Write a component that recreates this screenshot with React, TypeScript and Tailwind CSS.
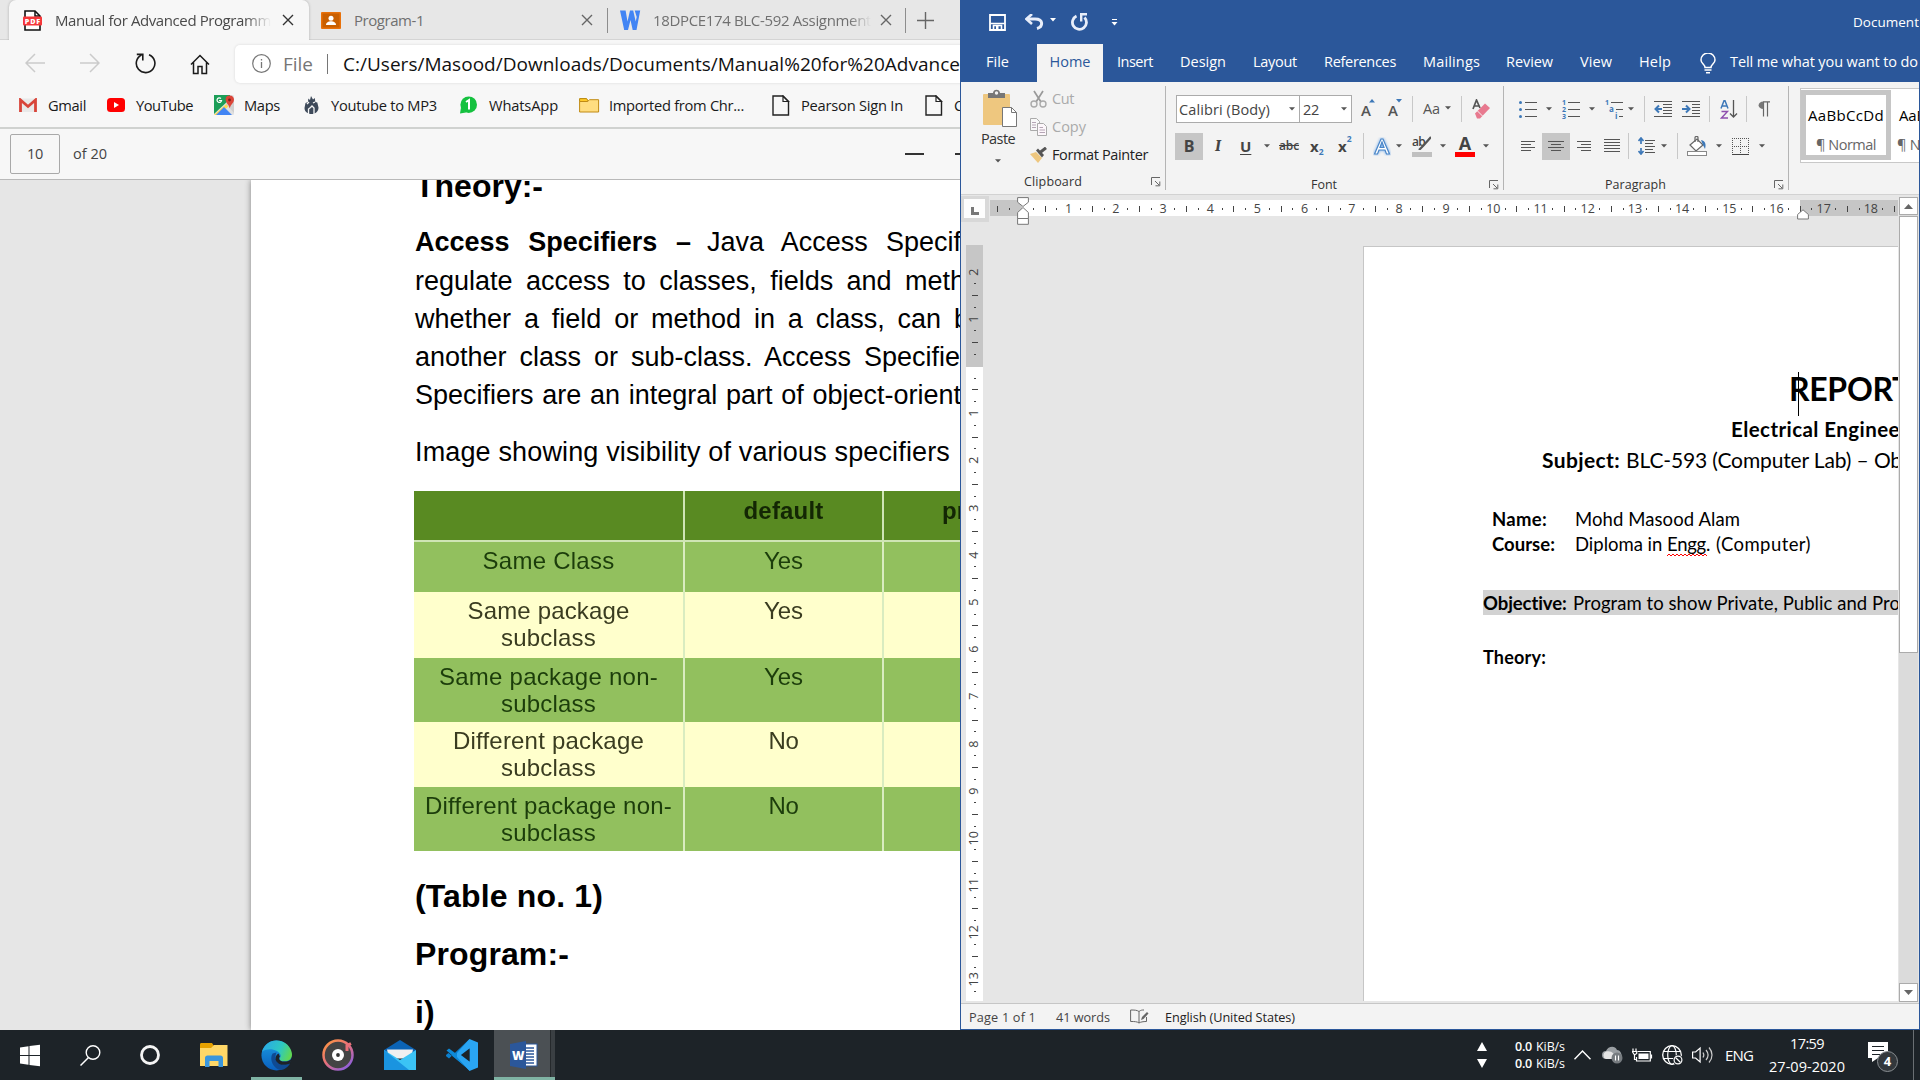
import React, { useLayoutEffect, useRef, useState } from "react";

type TProps = { w: number; children: string; className?: string; by?: "letter" | "word" };

/** Single-line text whose tracking (or word spacing) is adjusted to fill a given width. */
function T({ w, children, className = "", by = "letter" }: TProps) {
  const ref = useRef<HTMLSpanElement>(null);
  const [gap, setGap] = useState(0);
  useLayoutEffect(() => {
    const natural = ref.current!.getBoundingClientRect().width;
    const count = by === "word" ? children.split(" ").length - 1 : children.length;
    setGap(count > 0 ? (w - natural) / count : 0);
  }, []);
  return (
    <span className={`block shrink-0 whitespace-pre ${className}`} style={{ width: w }}>
      <span ref={ref} style={by === "word" ? { wordSpacing: gap } : { letterSpacing: gap }}>
        {children}
      </span>
    </span>
  );
}

function Svg({ w, h, className = "", children }: { w: number; h: number; className?: string; children: React.ReactNode }) {
  return (
    <svg width={w} height={h} viewBox={`0 0 ${w} ${h}`} fill="none" className={`block shrink-0 ${className}`}>
      {children}
    </svg>
  );
}

/* ---------------------------------------------------------------- Browser */

const Cross = ({ className = "" }: { className?: string }) => (
  <Svg w={12} h={12} className={className}>
    <path d="M1 1l10 10M11 1L1 11" stroke="currentColor" strokeWidth="1.4" />
  </Svg>
);

const PageIcon = ({ className = "" }: { className?: string }) => (
  <Svg w={18} h={21} className={className}>
    <path d="M1 1h10l5.500 5.500V20H1z" stroke="#222" strokeWidth="1.4" />
    <path d="M11 1v5.500h5.500z" stroke="#222" strokeWidth="1.200" />
  </Svg>
);

function TabStrip() {
  return (
    <div className="flex h-10 shrink-0 items-center bg-[#e7e7e7] pl-[9px] shadow-[inset_0_-1px_0_#d4d4d4]">
      <div className="flex h-10 w-[300px] shrink-0 items-center rounded-t-[7px] bg-[#f7f7f7] pl-3.5 shadow-[0_0_3px_#00000040]">
        <Svg w={20} h={21}>
          <path d="M2 1h10l5 5v14H2z" fill="#fff" stroke="#111" strokeWidth="1.600" />
          <path d="M12 1v5h5" stroke="#111" strokeWidth="1.500" />
          <rect x="0" y="6.500" width="19" height="9" rx="1" fill="#f5363a" />
          <text x="1.800" y="13.600" fontSize="7.200" fontWeight="800" fill="#fff" fontFamily="Open Sans" textLength="15.400">PDF</text>
        </Svg>
        <div className="ml-3 w-[216px] overflow-hidden text-[15px] leading-[39px] text-[#4a4a4a] [mask-image:linear-gradient(to_right,#000_88%,transparent)]">
          <T w={216}>Manual for Advanced Programm</T>
        </div>
        <Cross className="ml-[11px] text-[#333]" />
      </div>
      <Svg w={20} h={17} className="ml-3">
        <rect width="20" height="17" rx="1" fill="#e8710a" />
        <rect x="1.500" y="1.500" width="17" height="14" fill="#c95f00" />
        <circle cx="10" cy="6.200" r="2.500" fill="#fff" />
        <path d="M5 13c0-5 10-5 10 0z" fill="#fff" />
      </Svg>
      <T w={70} className="ml-[13px] text-[15px] leading-[39px] text-[#707070]">Program-1</T>
      <Cross className="ml-[157px] text-[#666]" />
      <div className="ml-[14px] h-[25px] w-px bg-[#8d8d8d]" />
      <Svg w={21} h={21} className="ml-3">
        <path d="M0 0.500h5.600l1.900 11L10 .500h3.200l2.500 11 1-4.500-2-6.500h5.500L16.500 20h-3.800L10.500 10 8 20H4.200z" fill="#4285f4" />
      </Svg>
      <div className="ml-3 w-[218px] overflow-hidden text-[15px] leading-[39px] text-[#707070] [mask-image:linear-gradient(to_right,#000_90%,transparent)]">
        <T w={218}>18DPCE174 BLC-592 Assignment</T>
      </div>
      <Cross className="ml-[9px] text-[#666]" />
      <div className="ml-[13px] h-[25px] w-px bg-[#8d8d8d]" />
      <Svg w={17} h={17} className="ml-[11px]">
        <path d="M8.500 0v17M0 8.500h17" stroke="#666" strokeWidth="1.400" />
      </Svg>
    </div>
  );
}

function AddressRow() {
  return (
    <div className="flex h-[48px] shrink-0 items-center bg-[#f7f7f7] pl-[25px]">
      <Svg w={20} h={20} className="-mt-[2px]">
        <path d="M20 10H1M10 1l-9 9 9 9" stroke="#cbcbcb" strokeWidth="1.500" />
      </Svg>
      <Svg w={20} h={20} className="-mt-[2px] ml-[35px]">
        <path d="M0 10h19M10 1l9 9-9 9" stroke="#cbcbcb" strokeWidth="1.500" />
      </Svg>
      <Svg w={21} h={21} className="-mt-[2px] ml-[35px]">
        <path d="M14 1.700A9.300 9.300 0 1 1 6.500 2" stroke="#1b1b1b" strokeWidth="1.600" />
        <path d="M1.800 1.400h6v6" stroke="#1b1b1b" strokeWidth="1.600" />
      </Svg>
      <Svg w={20} h={21} className="ml-[34px]">
        <path d="M1 10.500L10 1.500l9 9M3.500 8.500v11h4.500v-7h4v7h4.500v-11" stroke="#1b1b1b" strokeWidth="1.500" />
      </Svg>
      <div className="ml-[25px] flex h-[38px] w-[740px] shrink-0 items-center rounded-[5px] bg-white pl-[17px] shadow-[0_0_3px_#00000020]">
        <Svg w={19} h={19} className="-mt-[2px]">
          <circle cx="9.500" cy="9.500" r="8.800" stroke="#777" strokeWidth="1.200" />
          <path d="M9.500 8v6M9.500 5v1.500" stroke="#777" strokeWidth="1.300" />
        </Svg>
        <T w={30} className="ml-3 text-[19px] leading-[38px] text-[#767676]">File</T>
        <div className="ml-3.5 h-5 w-px bg-[#767676]" />
        <T w={617} className="ml-[15px] text-[19px] leading-[38px] text-[#111]">
          C:/Users/Masood/Downloads/Documents/Manual%20for%20Advance
        </T>
      </div>
    </div>
  );
}

function FavoritesBar() {
  return (
    <div className="flex h-[41px] shrink-0 items-center border-b-2 border-[#d0d2d0] bg-[#f7f7f7] pb-[5px] pl-[19px] text-[14.700px] leading-[35px] text-[#1a1a1a]">
      <Svg w={18} h={14}>
        <rect x="1" y="0.500" width="16" height="13.500" fill="#e9e9e9" />
        <path d="M1.500 14V2l7.500 6.500L16.500 2v12" stroke="#d8453a" strokeWidth="2.800" />
      </Svg>
      <T w={38} className="ml-[11px]">Gmail</T>
      <Svg w={18} h={14} className="ml-[21px]">
        <rect width="18" height="14" rx="3.500" fill="#f00" />
        <path d="M7 4l5 3-5 3z" fill="#fff" />
      </Svg>
      <T w={57} className="ml-[11px]">YouTube</T>
      <Svg w={20} h={20} className="ml-[21px]">
        <rect width="20" height="20" rx="1.500" fill="#e0e0e0" />
        <path d="M0 0h16v4L0 19z" fill="#1c9e58" />
        <path d="M0 20L19 3v4L5 20z" fill="#ffd94d" />
        <path d="M2 20l8-8 8 8z" fill="#4285f4" />
        <path d="M12 9l8 9V4z" fill="#d0d0d0" />
        <path d="M15.500 0.500c5.500 0 5.500 6 2.300 8.700-1.300 1.500-1.800 3-2 4.300-.6-2-1-3-2.300-4.500-3-3.500-2.500-8.500 2-8.500z" fill="#db4437" />
        <circle cx="15.500" cy="5" r="1.400" fill="#7b1f17" />
        <path d="M7 3.500a2.300 2.300 0 1 0 .6 2H5" stroke="#fff" strokeWidth="1.200" />
      </Svg>
      <T w={36} className="ml-2.5">Maps</T>
      <Svg w={15} h={18} className="ml-6">
        <path d="M7 0l2 3.500 1.800-1.500.5 4 2 .5 1.200 5c0 4-3 6.500-7 6.500S.5 15.500.5 12l1-5L4 6l.3-3.500L6 4z" fill="#3e4a5a" />
        <path d="M4.500 18v-5l2-1.500L8 10l2 2v6M3 8l2-2M9 7l2-1" stroke="#f7f7f7" strokeWidth="1.300" />
      </Svg>
      <T w={106} className="ml-3">Youtube to MP3</T>
      <Svg w={17} h={18} className="ml-[23px]">
        <circle cx="8.700" cy="8.700" r="8.300" fill="#15c13f" />
        <path d="M0 17.500l1-6 5 5z" fill="#15c13f" />
        <path d="M6 6l3-2v9.500" stroke="#fff" strokeWidth="2" />
      </Svg>
      <T w={69} className="ml-3">WhatsApp</T>
      <Svg w={21} h={16} className="ml-[21px]">
        <path d="M.6 1.600h7l2 3H.6z" fill="#ffc928" stroke="#b8860b" />
        <path d="M.6 4.500h8l2-1.800h9V15H.6z" fill="#ffdd80" stroke="#c08a14" />
      </Svg>
      <T w={135} className="ml-[9px]">Imported from Chr...</T>
      <PageIcon className="ml-7" />
      <T w={102} className="ml-[11px]">Pearson Sign In</T>
      <PageIcon className="ml-[22px]" />
      <T w={10} className="ml-[11px]">C</T>
    </div>
  );
}

function PdfToolbar() {
  return (
    <div className="flex h-[51px] shrink-0 items-center border-b border-[#b9b9b9] bg-[#f7f7f7] pl-2.5 text-[14.500px] leading-10 text-[#444]">
      <div className="flex h-10 w-[50px] shrink-0 justify-center rounded-[2px] border border-[#a9a9a9] leading-[38px]">
        <T w={16}>10</T>
      </div>
      <T w={34} className="ml-[13px]">of 20</T>
      <div className="ml-[798px] h-[1.500px] w-[19px] shrink-0 bg-[#333]" />
      <div className="ml-[31px] h-[1.500px] w-[19px] shrink-0 bg-[#333]" />
    </div>
  );
}

const specifierRows = [
  { lines: [["Same Class", 132]], access: "Yes", w: 39, h: "h-[50px] bg-[#92c05e] text-[#1c3d0b]" },
  { lines: [["Same package", 162], ["subclass", 95]], access: "Yes", w: 39, h: "h-[66px] bg-[#ffffcc] text-[#3a3c20]" },
  { lines: [["Same package non-", 219], ["subclass", 95]], access: "Yes", w: 39, h: "h-[64px] bg-[#92c05e] text-[#1c3d0b]" },
  { lines: [["Different package", 191], ["subclass", 95]], access: "No", w: 30, h: "h-[65px] bg-[#ffffcc] text-[#3a3c20]" },
  { lines: [["Different package non-", 247], ["subclass", 95]], access: "No", w: 30, h: "h-[64px] bg-[#92c05e] text-[#1c3d0b]" },
] as { lines: [string, number][]; access: string; w: number; h: string }[];

function SpecifierTable() {
  return (
    <div className="-ml-px mt-[20px] w-[560px] text-[24px] leading-[27px] blur-[0.5px]">
      <div className="flex h-[51px] border-b-2 border-[#cfe5b5] bg-[#598a22] pt-1.5 font-bold text-[#132604]">
        <div className="-mt-1.5 h-[50px] w-[271px] border-r-2 border-[#cfe5b5]" />
        <div className="-mt-1.5 flex h-[50px] w-[199px] justify-center border-r-2 border-[#cfe5b5] pt-1.5">
          <T w={80}>default</T>
        </div>
        <T w={24} className="ml-[58px]">pr</T>
      </div>
      {specifierRows.map((r, i) => (
        <div key={i} className={`flex ${r.h}`}>
          <div className="flex w-[271px] flex-col items-center border-r-2 border-[#d9ecc0] pt-[5px]">
            {r.lines.map(([t, w], k) => (
              <T key={k} w={w}>{t}</T>
            ))}
          </div>
          <div className="flex w-[199px] justify-center border-r-2 border-[#d9ecc0] pt-[5px]">
            <T w={r.w}>{r.access}</T>
          </div>
        </div>
      ))}
    </div>
  );
}

function PdfView() {
  return (
    <div className="flex min-h-0 flex-1 overflow-hidden bg-[#e6e6e6] pl-[251px]">
      <div className="w-[720px] shrink-0 bg-white pl-[164px] font-['Liberation_Sans',sans-serif] text-black shadow-[0_0_6px_#00000070]">
        <T w={128} className="-mt-[14px] h-10 text-[32px] font-bold leading-10">Theory:-</T>
        <div className="mt-[17px] flex text-[27px] leading-[39px]">
          <T w={276} by="word" className="font-bold">Access Specifiers –</T>
          <T w={254} by="word" className="ml-4">Java Access Specif</T>
        </div>
        <div className="text-[27px] leading-[38px]">
          <T w={550} by="word">regulate access to classes, fields and meth</T>
          <T w={554} by="word">whether a field or method in a class, can b</T>
          <T w={545} by="word">another class or sub-class. Access Specifie</T>
          <T w={546} by="word">Specifiers are an integral part of object-orient</T>
          <T w={535} className="mt-[19px]">Image showing visibility of various specifiers</T>
        </div>
        <SpecifierTable />
        <div className="mt-[16px] text-[32px] font-bold leading-[58px]">
          <T w={188}>(Table no. 1)</T>
          <T w={154}>Program:-</T>
          <T w={20}>i)</T>
        </div>
      </div>
    </div>
  );
}

function Browser() {
  return (
    <section className="flex w-[960px] shrink-0 flex-col overflow-hidden">
      <TabStrip />
      <AddressRow />
      <FavoritesBar />
      <PdfToolbar />
      <PdfView />
    </section>
  );
}

/* ------------------------------------------------------------------- Word */

const Caret = ({ className = "" }: { className?: string }) => (
  <Svg w={6} h={4} className={className}>
    <path d="M0 .3h6L3 3.500z" fill="#555" />
  </Svg>
);

const Sep = ({ className = "" }: { className?: string }) => (
  <div className={`h-[26px] w-px shrink-0 bg-[#c8c8c8] ${className}`} />
);

const Launcher = ({ className = "" }: { className?: string }) => (
  <Svg w={10} h={10} className={className}>
    <path d="M.5 8V.5H9M4 4l4 4M8.800 4.500v4.300H4.500" stroke="#666" />
  </Svg>
);

const Lines = ({ rows, className = "" }: { rows: [number, number][]; className?: string }) => (
  <Svg w={18} h={16} className={className}>
    {rows.map(([x, w], i) => (
      <rect key={i} x={x} y={1 + i * 3} width={w} height="1" fill="#555" />
    ))}
  </Svg>
);

function TitleBar() {
  return (
    <div className="flex h-11 shrink-0 items-center pl-7 text-white">
      <Svg w={17} h={17}>
        <path d="M1 1h15v15H1z" stroke="#fff" strokeWidth="1.800" />
        <path d="M1.500 9.500h14M4.500 16v-4.500h8V16" stroke="#fff" strokeWidth="1.600" />
        <rect x="7" y="12" width="2.500" height="4" fill="#fff" />
      </Svg>
      <Svg w={19} h={16} className="ml-[19px]">
        <path d="M2 5h8c9 0 8 8 2 9.500" stroke="#e8eefa" strokeWidth="3" />
        <path d="M7 0L1.500 5 7 10" stroke="#e8eefa" strokeWidth="2.600" />
      </Svg>
      <Svg w={6} h={4} className="mb-1 ml-[6px]"><path d="M0 0h6L3 3.500z" fill="#fff" /></Svg>
      <Svg w={18} h={18} className="ml-[15px]">
        <path d="M5.500 3A7 7 0 1 0 13.500 4.500" stroke="#e8eefa" strokeWidth="2.800" />
        <path d="M9 1.300h7M10.200 1v7.500" stroke="#e8eefa" strokeWidth="2.400" />
      </Svg>
      <Svg w={7} h={7} className="ml-[22px]">
        <path d="M1 .5h5" stroke="#fff" />
        <path d="M.5 3h6l-3 3.500z" fill="#fff" />
      </Svg>
      <T w={66} className="-mt-px ml-[735px] text-[13.500px] leading-[18px]">Document</T>
    </div>
  );
}

const ribbonTabs: [string, number, string][] = [
  ["Insert", 36, "ml-[14px]"],
  ["Design", 46, "ml-[27px]"],
  ["Layout", 44, "ml-[27px]"],
  ["References", 72, "ml-[27px]"],
  ["Mailings", 57, "ml-[27px]"],
  ["Review", 47, "ml-[26px]"],
  ["View", 32, "ml-[27px]"],
  ["Help", 32, "ml-[27px]"],
];

function RibbonTabs() {
  return (
    <div className="flex h-[38px] shrink-0 items-start pl-[25px] text-[14.500px] leading-[36px] text-white">
      <T w={23}>File</T>
      <div className="ml-7 flex h-[38px] w-[66px] shrink-0 justify-center bg-[#f3f3f3] text-[#2b579a]">
        <T w={41}>Home</T>
      </div>
      {ribbonTabs.map(([t, w, m]) => (
        <T key={t} w={w} className={m}>{t}</T>
      ))}
      <Svg w={16} h={21} className="ml-[29px] mt-[9px]">
        <path d="M5 14.500c0-3-4-4-4-7.500a7 7 0 0 1 14 0c0 3.500-4 4.500-4 7.500z" stroke="#fff" strokeWidth="1.500" />
        <path d="M4.500 17h7M6 19.800h4" stroke="#fff" strokeWidth="1.500" />
      </Svg>
      <T w={188} className="ml-[14px]">Tell me what you want to do</T>
    </div>
  );
}

function ClipboardGroup() {
  return (
    <div className="mt-1 flex h-[104px] w-[205px] shrink-0 flex-col border-r border-[#b4b4b4]">
      <div className="flex h-[88px]">
        <div className="flex w-[66px] flex-col items-center pl-[10px] pt-[3px]">
          <Svg w={36} h={40} className="ml-[2px]">
            <rect x="1" y="5" width="27" height="31" rx="1" fill="#eec77f" />
            <path d="M6 9V4h5c0-4.500 7-4.500 7 0h5v5z" fill="#777" />
            <circle cx="14.500" cy="4" r="1.700" fill="#f3f3f3" />
            <path d="M20.500 18.500h9l5 5v14h-14z" fill="#fff" stroke="#777" />
            <path d="M29.500 18.500v5h5" stroke="#777" />
          </Svg>
          <T w={34} className="-ml-[2px] mt-[1px] text-[14.500px] leading-[18px] text-[#333]">Paste</T>
          <Caret className="-ml-[2px] mt-[11px]" />
        </div>
        <div className="-mt-px text-[14.500px] leading-[28px]">
          <div className="flex h-7 items-center pl-[3px] text-[#aaa]">
            <Svg w={17} h={18}>
              <path d="M4 1l7 11M13 1L6 12" stroke="#999" strokeWidth="1.700" />
              <circle cx="4" cy="14" r="3" stroke="#aaa" strokeWidth="1.400" />
              <circle cx="13" cy="14" r="3" stroke="#aaa" strokeWidth="1.400" />
            </Svg>
            <T w={22} className="ml-[5px]">Cut</T>
          </div>
          <div className="flex h-7 items-center pl-[3px] text-[#aaa]">
            <Svg w={17} h={18}>
              <path d="M.5.500h6l3 3v9h-9z" fill="#f8f8f8" stroke="#aaa" />
              <path d="M7.500 5.500h6l3 3v9h-9z" fill="#fdf7fb" stroke="#aaa" />
              <path d="M2 4.500h4M2 7h4M2 9.500h4M9.500 9.500H13M9.500 12H15M9.500 14.500H15" stroke="#b5a5b5" />
            </Svg>
            <T w={34} className="ml-[5px]">Copy</T>
          </div>
          <div className="flex h-7 items-center pl-[3px] text-[#222]">
            <Svg w={18} h={16}>
              <path d="M0 7l6-2 6 6-4 5z" fill="#eec77f" />
              <path d="M6 3.500l6 7 2-2.500-6-6.500z" fill="#555" />
              <path d="M10 5.500L16 .800" stroke="#555" strokeWidth="3" />
            </Svg>
            <T w={96} className="ml-1">Format Painter</T>
          </div>
        </div>
      </div>
      <div className="mt-[3px] flex h-4 items-center pl-[63px] text-[12.500px] leading-4 text-[#333]">
        <T w={58}>Clipboard</T>
        <Launcher className="ml-[69px]" />
      </div>
    </div>
  );
}

function FontGroup() {
  return (
    <div className="mt-1 h-[104px] w-[338px] shrink-0 border-r border-[#b4b4b4]">
      <div className="mt-[9px] flex h-7 items-center pl-2.5 text-[14.500px] leading-[27px] text-[#444]">
        <div className="flex h-7 w-[124px] shrink-0 items-center border border-[#ababab] bg-white pl-[2px]">
          <T w={91}>Calibri (Body)</T>
          <Caret className="ml-[19px]" />
        </div>
        <div className="-ml-px flex h-7 w-[53px] shrink-0 items-center border border-[#ababab] bg-white pl-[3px]">
          <T w={16}>22</T>
          <Caret className="ml-[22px]" />
        </div>
        <div className="ml-[9px] flex w-[15px] shrink-0 text-[#555]">
          <span className="mt-[1px] text-[15px] font-semibold leading-[26px]">A</span>
          <Svg w={6} h={4} className="-ml-[2px] mt-[3px]"><path d="M0 3.500h6L3 0z" fill="#3d78b8" /></Svg>
        </div>
        <div className="ml-[12px] flex w-[15px] shrink-0 text-[#555]">
          <span className="mt-[2px] text-[15px] font-semibold leading-[26px]">A</span>
          <Svg w={6} h={4} className="-ml-[2px] mt-[4px]"><path d="M0 0h6L3 3.500z" fill="#3d78b8" /></Svg>
        </div>
        <Sep className="ml-[9px]" />
        <T w={17} className="-mt-[2px] ml-2.5 text-[#555]">Aa</T>
        <Caret className="-mt-[2px] ml-[5px]" />
        <Sep className="ml-[10px]" />
        <Svg w={19} h={20} className="ml-[10px]">
          <path d="M1 10L4.500 1 8 9M2 7h5" stroke="#555" strokeWidth="1.700" />
          <path d="M3 14.500L13 4.500l5 4.500L8 19.500H5z" fill="#e8798f" />
          <path d="M5.500 12l5 5" stroke="#f3f3f3" />
        </Svg>
      </div>
      <div className="mt-[9px] flex h-7 items-center pl-[9px] text-[#444]">
        <div className="flex h-[27px] w-7 shrink-0 items-center justify-center bg-[#c6c6c6] text-[16px] font-bold">B</div>
        <span className="ml-3 w-[12px] font-serif text-[17px] font-bold italic">I</span>
        <span className="ml-[13px] w-[13px] text-[15px] font-bold underline underline-offset-2">U</span>
        <Caret className="ml-[11px]" />
        <T w={20} className="ml-[9px] text-[12px] font-semibold line-through">abc</T>
        <div className="ml-[11px] flex w-[15px] shrink-0 items-end">
          <span className="text-[15px] font-bold leading-6">x</span>
          <span className="text-[8.500px] font-bold leading-3 text-[#3d78b8]">2</span>
        </div>
        <div className="ml-[13px] flex w-[15px] shrink-0 items-start">
          <span className="text-[15px] font-bold leading-6">x</span>
          <span className="text-[8.500px] font-bold leading-[10px] text-[#3d78b8]">2</span>
        </div>
        <Sep className="ml-[10px]" />
        <Svg w={18} h={19} className="ml-[9px]">
          <path d="M1.500 17L8 2h2l6.500 15h-3L12 13H6l-1.500 4zM7 10.500h4L9 5z" fill="#fff" stroke="#4a86c8" strokeWidth="1.200" className="drop-shadow-[0_0_1.500px_#6fa8e8]" />
        </Svg>
        <Caret className="ml-[5px]" />
        <div className="ml-[10px] flex h-[21px] w-5 shrink-0 flex-col justify-between">
          <div className="flex">
            <T w={13} className="text-[12px] font-semibold leading-[12px]">ab</T>
            <Svg w={14} h={14} className="-ml-[8px]"><path d="M14 1L6 10l-4 4" stroke="#555" strokeWidth="2.200" /></Svg>
          </div>
          <div className="h-[5px] shrink-0 bg-[#c0c0c0]" />
        </div>
        <Caret className="ml-[8px]" />
        <div className="ml-[9px] w-5 shrink-0">
          <div className="text-center text-[18px] font-bold leading-[15px]">A</div>
          <div className="mt-[1px] h-[5px] bg-[#ff0000]" />
        </div>
        <Caret className="ml-[8px]" />
      </div>
      <div className="mt-[17px] flex h-4 items-center pl-[145px] text-[12.500px] leading-4 text-[#333]">
        <T w={26}>Font</T>
        <Launcher className="ml-[152px]" />
      </div>
    </div>
  );
}

function ParagraphGroup() {
  return (
    <div className="mt-1 h-[104px] w-[285px] shrink-0 border-r border-[#b4b4b4]">
      <div className="mt-[9px] flex h-7 items-center pl-[15px]">
        <Svg w={18} h={18}>
          <path d="M6 2.500h12M6 9.500h12M6 16.500h12" stroke="#555" />
          <g fill="#3d78b8"><circle cx="1.500" cy="2.500" r="1.500" /><circle cx="1.500" cy="9.500" r="1.500" /><circle cx="1.500" cy="16.500" r="1.500" /></g>
        </Svg>
        <Caret className="ml-[9px]" />
        <Svg w={18} h={19} className="ml-[10px]">
          <path d="M6 2.500h12M6 9.500h12M6 16.500h12" stroke="#555" />
          <g fill="#3d78b8" fontSize="7" fontWeight="700" fontFamily="Open Sans"><text y="5">1</text><text y="12">2</text><text y="19">3</text></g>
        </Svg>
        <Caret className="ml-[9px]" />
        <Svg w={18} h={19} className="ml-[10px]">
          <path d="M6 2.500h12M11 9.500h7M14 16.500h4" stroke="#555" />
          <g fill="#3d78b8" fontSize="8" fontWeight="700" fontFamily="Open Sans"><text y="5" fontSize="7">1</text><text x="4" y="12">a</text><text x="10" y="19">i</text></g>
        </Svg>
        <Caret className="ml-[5px]" />
        <Sep className="ml-[10px]" />
        <Svg w={18} h={16} className="ml-[9px]">
          <path d="M0 .5h18M9 3.500h9M9 6.500h9M9 9.500h9M9 12.500h9M0 15.500h18" stroke="#555" />
          <path d="M8 8H2M5 4.500L1.500 8 5 11.500" stroke="#3d78b8" strokeWidth="2" />
        </Svg>
        <Svg w={18} h={16} className="ml-[10px]">
          <path d="M0 .5h18M10 3.500h8M10 6.500h8M10 9.500h8M10 12.500h8M0 15.500h18" stroke="#555" />
          <path d="M0 8h6M4 4.500L7.500 8 4 11.500" stroke="#3d78b8" strokeWidth="2" />
        </Svg>
        <Sep className="ml-[9px]" />
        <Svg w={18} h={19} className="ml-[10px]">
          <path d="M1 8.500L4 .8h1l3 7.700M2 6h5" stroke="#3d78b8" strokeWidth="1.500" />
          <path d="M1.500 11.500h6l-6 6.500h6.500" stroke="#8e4fae" strokeWidth="1.400" />
          <path d="M13.500 0v17M10 13.500l3.500 3.500 3.500-3.500" stroke="#555" strokeWidth="1.300" />
        </Svg>
        <Sep className="ml-[8px]" />
        <Svg w={12} h={16} className="ml-[11px]">
          <path d="M5.500 15.500V1M9.500 15.500V1M12 .800H5" stroke="#666" strokeWidth="1.200" />
          <path d="M5.500.500C-1 .500-1 8 5.500 8z" fill="#777" />
        </Svg>
      </div>
      <div className="mt-[9px] flex h-7 items-center pl-[15px]">
        <Lines rows={[[2, 14], [2, 10], [2, 14], [2, 10]]} className="mt-[3px]" />
        <div className="ml-[5px] flex h-[27px] w-7 shrink-0 items-center justify-center bg-[#c6c6c6]">
          <Lines rows={[[1, 16], [4, 10], [1, 16], [4, 10]]} className="mt-[3px]" />
        </div>
        <Lines rows={[[2, 14], [6, 10], [2, 14], [6, 10]]} className="ml-[5px] mt-[3px]" />
        <Lines rows={[[1, 16], [1, 16], [1, 16], [1, 16], [1, 16]]} className="ml-[10px]" />
        <Sep className="ml-[7px]" />
        <Svg w={18} h={18} className="ml-[9px]">
          <path d="M7 3.500h10M7 6.500h8M7 9.500h10M7 12.500h8M7 15.500h10" stroke="#555" />
          <path d="M3 1v6M3 11v6M.5 4L3 1l2.500 3M.5 14L3 17l2.500-3" stroke="#3d78b8" strokeWidth="1.700" />
        </Svg>
        <Caret className="ml-[5px]" />
        <Sep className="ml-[10px]" />
        <Svg w={20} h={20} className="ml-[9px]">
          <path d="M3 9l7-6 6 6-7 6z" fill="#fff" stroke="#666" strokeWidth="1.200" />
          <path d="M8 6V1.500c0-1.500 3-1.500 3 0V6" stroke="#666" strokeWidth="1.200" />
          <path d="M14 4c5 1 5 5 4 9l-2-4z" fill="#3d78b8" />
          <rect x=".5" y="15.500" width="19" height="4" fill="#fff" stroke="#888" />
        </Svg>
        <Caret className="ml-[9px]" />
        <Svg w={17} h={17} className="ml-[10px]">
          <path d="M.5 0v16M8.500 0v16M16.500 0v16M0 .5h17M0 8.500h17" stroke="#555" strokeDasharray="1 1" />
          <path d="M0 16.500h17" stroke="#444" />
        </Svg>
        <Caret className="ml-[10px]" />
      </div>
      <div className="mt-[17px] flex h-4 items-center pl-[101px] text-[12.500px] leading-4 text-[#333]">
        <T w={61}>Paragraph</T>
        <Launcher className="ml-[108px]" />
      </div>
    </div>
  );
}

function StylesGallery() {
  return (
    <div className="ml-[11px] mt-[6px] flex h-[75px] flex-1 overflow-hidden border border-r-0 border-[#c8c8c8] bg-white">
      <div className="mt-px flex h-[70px] w-[90px] shrink-0 flex-col items-center border-[5px] border-[#c6c6c6]">
        <T w={76} className="mt-[10px] text-[15px] leading-5 text-black">AaBbCcDd</T>
        <T w={60} className="mt-[10px] text-[14.500px] leading-5 text-[#666]">¶ Normal</T>
      </div>
      <div className="ml-[6px] shrink-0">
        <T w={27} className="ml-[2px] mt-[16px] text-[15px] leading-5 text-black">AaB</T>
        <T w={66} className="mt-[10px] text-[14.500px] leading-5 text-[#666]">¶ No Spac</T>
      </div>
    </div>
  );
}

const CELL = 11.81;

/** Ruler marks: numbers on whole centimetres, bars on halves, dots on quarters. */
function RulerMarks({ from, to, vertical = false }: { from: number; to: number; vertical?: boolean }) {
  const marks = [];
  for (let k = from; k <= to; k++) {
    const cm = Math.abs(k / 4);
    const whole = k % 4 === 0;
    marks.push(
      <div
        key={k}
        className={`flex shrink-0 items-center justify-center ${vertical ? "w-full" : "h-full"}`}
        style={vertical ? { height: CELL } : { width: CELL }}
      >
        {whole && k !== 0 && (
          <span className={`text-[12.500px] leading-none text-[#444] ${vertical ? "-rotate-90" : ""}`}>{cm}</span>
        )}
        {!whole && k % 2 === 0 && <i className={vertical ? "h-px w-1.5 bg-[#444]" : "h-1.5 w-px bg-[#444]"} />}
        {k % 2 !== 0 && <i className={vertical ? "h-px w-0.5 bg-[#444]" : "h-0.5 w-px bg-[#444]"} />}
      </div>,
    );
  }
  return <>{marks}</>;
}

function HorizontalRuler() {
  return (
    <div className="flex h-[31px] shrink-0">
      <div className="mt-px flex h-[26px] w-7 items-center justify-center bg-[#d8d8d8] pb-0.5 pr-[2px]">
        <div className="flex h-[19px] w-[21px] items-center justify-center bg-[#fdfdfd]">
          <Svg w={8} h={8} className="ml-[1px] mt-[5px]"><path d="M1.500 0v6.500H8" stroke="#777" strokeWidth="3" /></Svg>
        </div>
      </div>
      <div className="relative ml-px mt-[5px] flex h-4 w-[908px] bg-[linear-gradient(to_right,#c6c6c6_32px,#fff_32px,#fff_810px,#c6c6c6_810px)]">
        <div className="flex h-[18px] w-[908px] overflow-hidden pl-[2px]">
          <RulerMarks from={-2} to={74} />
        </div>
        <Svg w={12} h={28} className="absolute -top-[3px] left-[27px]">
          <path d="M.6.600h10.800v4.600L6 9.500.6 5.200zM.6 21.500v-6L6 10.500l5.400 5v6z" fill="#fff" stroke="#777" />
          <path d="M.6 21.500h10.800v5.800H.6z" fill="#fff" stroke="#777" />
        </Svg>
        <Svg w={12} h={11} className="absolute left-[807px] top-[9px]">
          <path d="M.6 10V5.500L6 .8l5.400 4.700V10z" fill="#fff" stroke="#777" />
        </Svg>
      </div>
    </div>
  );
}

function VerticalRuler() {
  return (
    <div className="ml-[5px] mt-[19px] flex h-[756px] w-[17px] shrink-0 flex-col overflow-hidden bg-[linear-gradient(to_bottom,#c6c6c6_122px,#fff_122px)] pt-[21px]">
      <RulerMarks from={-8} to={53} vertical />
    </div>
  );
}

function DocumentPage() {
  return (
    <div className="ml-[380px] mt-[20px] h-[755px] w-[535px] shrink-0 overflow-hidden border-l border-t border-[#c6c6c6] bg-white font-[Lato,sans-serif] text-black">
      <div className="relative pl-[425px] pt-[121px]">
        <T w={122} className="text-[32px] font-bold leading-[42px]">REPORT</T>
        <div className="absolute left-[434px] top-[125px] h-11 w-px bg-black" />
      </div>
      <T w={169} className="ml-[367px] mt-[4px] text-[20.500px] font-bold leading-[30px]">Electrical Enginee</T>
      <div className="ml-[178px] flex text-[21px] leading-[32px]">
        <T w={78} className="font-bold">Subject:</T>
        <T w={276} className="ml-[6px]">BLC-593 (Computer Lab) – Ob</T>
      </div>
      <div className="mt-[31px] pl-[128px] text-[18.500px] leading-[25px]">
        <div className="flex">
          <T w={55} className="font-bold">Name:</T>
          <T w={165} className="ml-[28px]">Mohd Masood Alam</T>
        </div>
        <div className="flex">
          <T w={63} className="font-bold">Course:</T>
          <T w={92} className="ml-[20px]">Diploma in </T>
          <div className="relative">
            <T w={39}>Engg</T>
            <Svg w={40} h={4} className="absolute bottom-0 left-0">
              <path d="M0 3l2-2 2 2 2-2 2 2 2-2 2 2 2-2 2 2 2-2 2 2 2-2 2 2 2-2 2 2 2-2 2 2 2-2 2 2 2-2 2 2" stroke="#f00" />
            </Svg>
          </div>
          <T w={105}>. (Computer)</T>
        </div>
      </div>
      <div className="ml-[119px] mt-[33px] flex h-[25px] bg-[#d2d2d2] text-[18.500px] leading-[27px]">
        <T w={84} className="font-bold">Objective:</T>
        <T w={327} className="ml-[6px]">Program to show Private, Public and Pro</T>
      </div>
      <T w={63} className="ml-[119px] mt-[29px] text-[18px] font-bold leading-[26px]">Theory:</T>
    </div>
  );
}

function ScrollBar() {
  return (
    <div className="-mt-[29px] ml-px flex h-[805px] w-[19px] shrink-0 flex-col bg-[#dbdbdb]">
      <div className="flex h-[18px] w-[19px] items-center justify-center border border-[#ababab] bg-white">
        <Svg w={9} h={5}><path d="M0 5h9L4.500 0z" fill="#666" /></Svg>
      </div>
      <div className="mt-px h-[437px] w-[19px] border border-[#ababab] bg-white" />
      <div className="mt-auto flex h-[19px] w-[19px] items-center justify-center border border-[#ababab] bg-white">
        <Svg w={9} h={5}><path d="M0 0h9L4.500 5z" fill="#666" /></Svg>
      </div>
    </div>
  );
}

function StatusBar() {
  return (
    <div className="flex h-[26px] shrink-0 items-center border-t border-[#c6c6c6] bg-[#f3f3f3] pl-[8px] text-[12.700px] leading-6 text-[#444]">
      <T w={67}>Page 1 of 1</T>
      <T w={54} className="ml-[20px]">41 words</T>
      <Svg w={19} h={16} className="ml-[20px]">
        <path d="M9 2.500C7 1 4 1 .6 1v11.500c4 0 6.400 0 8.400 1.500zM9 2.500C11 1 12 1 14 1M9 14c1.500-1 4-1.500 7.500-1.500V8" stroke="#666" />
        <path d="M11 11l1-3 5-5 1.500 1.500-5 5.500z" fill="#666" />
      </Svg>
      <T w={130} className="ml-[16px] text-[#222]">English (United States)</T>
    </div>
  );
}

function WordWindow() {
  return (
    <section className="flex w-[960px] shrink-0 flex-col overflow-hidden border-x border-b border-[#2b579a] bg-[#2b579a]">
      <TitleBar />
      <RibbonTabs />
      <div className="flex h-[113px] shrink-0 border-b border-[#d2d2d2] bg-[#f3f3f3]">
        <ClipboardGroup />
        <FontGroup />
        <ParagraphGroup />
        <StylesGallery />
      </div>
      <div className="flex min-h-0 flex-1 flex-col bg-[#e6e6e6]">
        <HorizontalRuler />
        <div className="flex min-h-0 flex-1">
          <VerticalRuler />
          <DocumentPage />
          <ScrollBar />
        </div>
      </div>
      <StatusBar />
    </section>
  );
}

/* ---------------------------------------------------------------- Taskbar */

function Taskbar() {
  return (
    <footer className="flex h-[50px] shrink-0 items-center bg-[#1d2328] pl-5 text-white">
      <Svg w={20} h={23}>
        <path d="M0 3.500L8.500 2.300V11H0zM9.500 2.100L20 .700V11H9.500zM0 12h8.500v8.700L0 19.500zM9.500 12H20v10.300L9.500 20.900z" fill="#fff" />
      </Svg>
      <Svg w={21} h={21} className="ml-10">
        <circle cx="13" cy="7.500" r="6.800" stroke="#fff" strokeWidth="1.400" />
        <path d="M8.500 12.500L.5 20.500" stroke="#fff" strokeWidth="1.500" />
      </Svg>
      <Svg w={20} h={20} className="ml-[39px]">
        <circle cx="10" cy="10" r="8.500" stroke="#f4f4f4" strokeWidth="2.800" />
      </Svg>
      <Svg w={28} h={24} className="ml-10">
        <path d="M0 1.500C0 .5.500 0 1.500 0H12l2 3v3H0z" fill="#e6a100" />
        <path d="M0 5h11l3-3h13.500v21H0z" fill="#ffd767" />
        <path d="M5 24v-9c0-1.500 1-2.500 2.500-2.500h13c1.500 0 2.500 1 2.500 2.500v9h-4.500v-6h-9v6z" fill="#3a96dd" />
      </Svg>
      <div className="ml-[23px] flex h-[50px] w-[51px] shrink-0 items-center justify-center border-b-[3px] border-[#7fb3a4] pt-[3px]">
        <svg viewBox="0 0 32 32" className="-ml-[1px] h-[31px] w-[31px]">
          <defs>
            <linearGradient id="edgeGreen" x1="0" x2="1" y1=".3" y2=".6"><stop stopColor="#2aa9e8" /><stop offset=".6" stopColor="#2ec9c0" /><stop offset="1" stopColor="#62d84e" /></linearGradient>
            <linearGradient id="edgeBlue" x1="0" x2="0" y1="0" y2="1"><stop stopColor="#1b9de2" /><stop offset="1" stopColor="#0a5fbe" /></linearGradient>
          </defs>
          <circle cx="16" cy="16" r="15.500" fill="url(#edgeBlue)" />
          <path d="M1 12C4 2 13-1 20 1c8 2 12 9 12 14 0 5-4 7-8 7-3 0-5-1-5-2 0-2 2-2 1-5-2-5-12-8-19-3z" fill="url(#edgeGreen)" />
          <path d="M12 14c-4 6 1 16 8 17 4 0 9-4 10-7-5 3-13 2-15-5 0-2 0-4 1-6z" fill="#0f4a92" />
          <path d="M19.500 17c-2 2 0 5 4 5.300 4 0 6-1 8.300-3L30 24c-5 3-13 2-15-4 0-3 1-5 3-6z" fill="#1d2328" />
        </svg>
      </div>
      <svg viewBox="0 0 32 32" className="ml-[20px] h-8 w-8 shrink-0">
        <defs><linearGradient id="groove" x1="0" y1="0" x2=".8" y2="1"><stop stopColor="#ff9a3d" /><stop offset=".5" stopColor="#e87078" /><stop offset="1" stopColor="#8b5fe0" /></linearGradient></defs>
        <circle cx="16" cy="16" r="14.500" fill="#444" stroke="url(#groove)" strokeWidth="2.500" />
        <circle cx="16" cy="16" r="6" fill="#fff" />
        <circle cx="16" cy="16" r="1.900" fill="#333" />
        <path d="M25 12V6.500l4-2" stroke="#e87078" strokeWidth="3" fill="none" />
      </svg>
      <svg viewBox="0 0 32 32" className="ml-[30px] h-8 w-8 shrink-0">
        <path d="M0 11L16 1l16 10v4H0z" fill="#0b63b5" />
        <path d="M3 10.500h26l-2 9H5z" fill="#f0f0f0" />
        <path d="M0 11l16 10 16-10v20H0z" fill="#3bc3f5" />
        <path d="M0 11l25 20H0z" fill="#1a94e0" />
      </svg>
      <svg viewBox="0 0 32 32" className="ml-[30px] h-8 w-8 shrink-0">
        <path d="M23.500 0L3 19.500l-2.500-2c-.7-.7-.7-1.300 0-2L2.500 14l21 17z" fill="#0c7fcd" />
        <path d="M23.500 31.500L.5 11.500l2.500-2L24 25z" fill="#0d89d8" />
        <path d="M23.500 0L32 3.500v25l-8.500 3.500V9.500L15 16l8.500 6.500V32L11 18v-4z" fill="#2aa5f3" />
        <path d="M23.500 9.500L15 16l8.500 6.500z" fill="#1d2328" />
      </svg>
      <div className="ml-4 flex h-[50px] w-[61px] shrink-0 border-b-[3px] border-[#7fb3a4] bg-[#4b5054]">
        <div className="flex w-14 items-center justify-center pl-[3px] pt-[2px]">
          <svg viewBox="0 0 28 28" className="h-7 w-7">
            <rect x="14" y="3" width="13" height="22" fill="#fff" stroke="#2b579a" />
            <path d="M16 7h8M16 10h8M16 13h8M16 16h8M16 19h8M16 22h8" stroke="#2b579a" strokeWidth="1.300" />
            <path d="M0 3l16-3v28L0 25z" fill="#2b579a" />
            <text x="2" y="18.500" fontFamily="Open Sans" fontSize="12" fontWeight="800" fill="#fff">W</text>
          </svg>
        </div>
        <div className="w-[5px] border-l border-[#25292c] bg-[#3a3f43]" />
      </div>
      <Svg w={10} h={28} className="ml-[922px]">
        <path d="M0 10h10L5 1zM0 18h10l-5 9z" fill="#fff" />
      </Svg>
      <div className="ml-[28px] text-[12.500px] leading-[17px]">
        {[0, 1].map((i) => (
          <div key={i} className="flex">
            <T w={17} className="font-semibold">0.0</T>
            <T w={29} className="ml-1">KiB/s</T>
          </div>
        ))}
      </div>
      <Svg w={17} h={10} className="ml-[9px]"><path d="M.5 9.200L8.500 1l8 8.200" stroke="#fff" strokeWidth="1.400" /></Svg>
      <Svg w={21} h={18} className="ml-[11px]">
        <path d="M4 13a4 4 0 0 1 0-8C6 0 13-1 15 4c3 0 5 3 5 9z" fill="#9a9fa3" />
        <path d="M4 13a4 4 0 0 1 0-7.500c5-1.500 9 2 10 7.500z" fill="#e4e4e4" />
        <circle cx="15" cy="12" r="5.500" fill="#777c80" />
        <path d="M13.500 9.500v5M16.500 9.500v5" stroke="#fff" strokeWidth="1.100" />
      </Svg>
      <Svg w={21} h={15} className="ml-[9px]">
        <path d="M5.500 3.500h12.800v9.500H4.500V9" stroke="#fff" strokeWidth="1.200" />
        <rect x="6.500" y="5.500" width="10" height="5.500" fill="#fff" />
        <path d="M19.500 6.500v4M1 .500v3M4 .500v3M.3 3.500h4.400v2L2.500 7zM2.500 7v4.500h2" stroke="#fff" strokeWidth="1.200" />
      </Svg>
      <Svg w={21} h={21} className="ml-[9px]">
        <circle cx="10" cy="10" r="9.300" stroke="#fff" strokeWidth="1.300" />
        <ellipse cx="10" cy="10" rx="4.300" ry="9.300" stroke="#fff" strokeWidth="1.200" />
        <path d="M1.500 6.500h17M1 13.500h14" stroke="#fff" strokeWidth="1.200" />
        <circle cx="16" cy="15" r="5.200" fill="#1d2328" />
        <circle cx="16" cy="15" r="3.900" stroke="#fff" strokeWidth="1.200" />
        <path d="M13.500 12.500l5 5" stroke="#fff" strokeWidth="1.200" />
      </Svg>
      <Svg w={22} h={18} className="ml-[9px]">
        <path d="M.6 6h3l4.500-4v14L3.600 12h-3z" stroke="#fff" strokeWidth="1.200" />
        <path d="M11 6.500c1 1.500 1 3.500 0 5M14 4c2.500 3 2.500 7 0 10M17 1.500c4 4.500 4 10.500 0 15" stroke="#ccc" strokeWidth="1.200" />
      </Svg>
      <T w={28} className="ml-[11px] text-[15px] leading-[50px]">ENG</T>
      <div className="ml-[16px] flex w-[76px] shrink-0 flex-col items-center text-[14.500px] leading-[23px]">
        <T w={34}>17:59</T>
        <T w={76}>27-09-2020</T>
      </div>
      <div className="relative ml-[23px] mt-1 h-8 w-[30px] shrink-0">
        <Svg w={20} h={20} className="mt-[1px]">
          <path d="M0 0h20v16h-10l-6 4v-4H0z" fill="#fff" />
          <path d="M4 4.500h12M4 8.500h12M4 12.500h8" stroke="#1d2328" strokeWidth="1.200" />
        </Svg>
        <div className="absolute left-[9px] top-[10px] flex h-[21px] w-[21px] items-center justify-center rounded-full border border-[#8a8f93] bg-[#33383c] text-[13px] font-bold">
          4
        </div>
      </div>
      <div className="ml-[15px] h-[50px] w-px bg-[#6a6f73]" />
    </footer>
  );
}

export default function App() {
  return (
    <main className="flex h-[1080px] w-[1920px] flex-col overflow-hidden font-['Open_Sans',sans-serif]">
      <div className="flex h-[1030px] shrink-0">
        <Browser />
        <WordWindow />
      </div>
      <Taskbar />
    </main>
  );
}
